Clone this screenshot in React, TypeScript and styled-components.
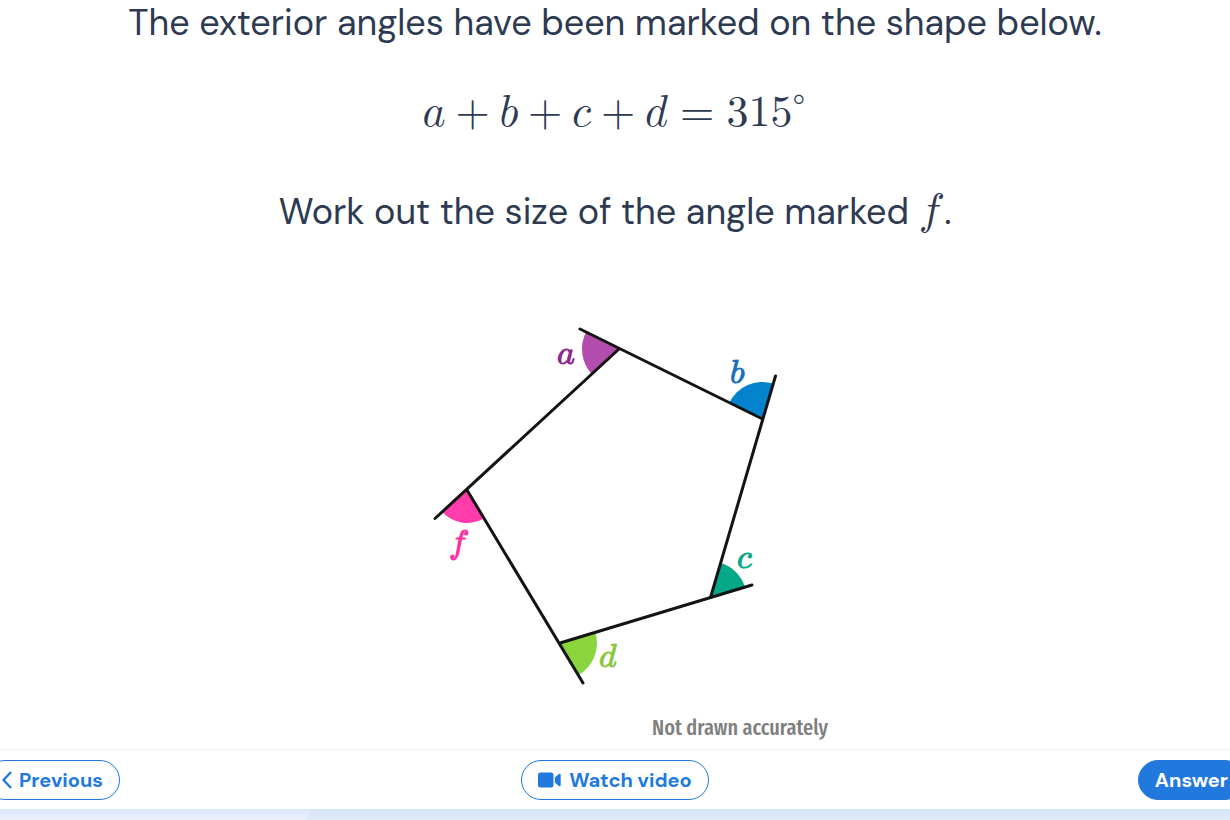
import React from "react";
import styled, { createGlobalStyle } from "styled-components";

const GlobalStyle = createGlobalStyle`
  *, *::before, *::after { box-sizing: border-box; }
  body {
    margin: 0;
    background: #fff;
    overflow-x: hidden;
  }
`;

const mathFont = `"Latin Modern Math", "Latin Modern Roman", "CMU Serif", "Liberation Serif", serif`;

const Page = styled.div`
  display: flex;
  flex-direction: column;
  min-height: 100vh;
  overflow: hidden;
  color: #2d3a52;
  font-family: "DM Sans", Inter, "Liberation Sans", sans-serif;
`;

const Question = styled.main`
  display: flex;
  flex: 1;
  flex-direction: column;
  align-items: center;
  text-align: center;
`;

const MathText = styled("math")`
  font-family: ${mathFont};
  font-size: 44px;
`;

const Line = styled.p`
  margin: 0;
  font-size: 36px;
  line-height: 46px;

  ${MathText} {
    margin-right: 4px;
  }
`;

const Equation = styled.div`
  margin: 48px 0 46px;
  line-height: 44px;
`;

const Figure = styled.figure`
  display: flex;
  flex-direction: column;
  width: 430px;
  max-width: 100%;
  margin: 85px 0 8px;
`;

const Drawing = styled.svg`
  display: block;
  width: 100%;
  font-family: ${mathFont};
  font-size: 34px;
  font-weight: 700;
  text-transform: math-auto;
`;

const Caption = styled.figcaption`
  align-self: flex-end;
  padding-right: 2px;
  color: #7f7f7f;
  font-family: "Fira Sans Extra Condensed", "Open Sans Condensed", "Roboto Condensed", Roboto, sans-serif;
  font-size: 22px;
  font-weight: 500;
  line-height: 24px;
`;

const ActionBar = styled.nav`
  display: grid;
  grid-template-columns: 1fr auto 1fr;
  align-items: center;
  margin: 0 -15px;
  padding: 10px 0 9px;
  border-top: 1px solid #edf1f8;
  background: #fff;
`;

const PillButton = styled.button<{ $filled?: boolean; $align: string }>`
  display: flex;
  align-items: center;
  justify-self: ${(p) => p.$align};
  gap: 7px;
  height: 40px;
  padding: 0 16px;
  border: 1px solid #2179de;
  border-radius: 20px;
  background: ${(p) => (p.$filled ? "#2179de" : "#fff")};
  color: ${(p) => (p.$filled ? "#fff" : "#2179de")};
  font-family: inherit;
  font-size: 20px;
  font-weight: 700;
  line-height: 24px;
  cursor: pointer;
`;

const Backdrop = styled.div`
  height: 11px;
  background:
    linear-gradient(rgba(190, 208, 238, 0.35), rgba(190, 208, 238, 0)),
    linear-gradient(120deg, #ecf2fe 270px, #e1ecfa 270px);
`;

type Point = [number, number];

interface Angle {
  name: string;
  vertex: Point;
  end: Point;
  radius: number;
  fill: string;
  ink: string;
  label: Point;
}

// Each side runs on past its vertex to `end`; the next angle's vertex closes the sector.
const angles: Angle[] = [
  { name: "a", vertex: [619, 349], end: [580, 329], radius: 37, fill: "#b24dae", ink: "#8e2790", label: [557, 364] },
  { name: "f", vertex: [467, 490], end: [435, 518.5], radius: 33, fill: "#ff3ca9", ink: "#ff2fa3", label: [449, 553] },
  { name: "d", vertex: [560, 643], end: [583, 683], radius: 37, fill: "#8ad53d", ink: "#8bc83e", label: [599, 667] },
  { name: "c", vertex: [710.5, 597.5], end: [752, 585], radius: 36, fill: "#06a88a", ink: "#06a88a", label: [737, 568] },
  { name: "b", vertex: [762.5, 419], end: [775.5, 376], radius: 37, fill: "#0383cb", ink: "#1a72bd", label: [730, 383] },
];

const towards = (from: Point, to: Point, distance: number): Point => {
  const dx = to[0] - from[0];
  const dy = to[1] - from[1];
  const length = Math.hypot(dx, dy);
  return [from[0] + (dx / length) * distance, from[1] + (dy / length) * distance];
};

const Pentagon = () => (
  <Drawing viewBox="400 320 430 396" role="img" aria-label="Pentagon with exterior angles a, b, c, d and f">
    {angles.map((angle, i) => {
      const next = angles[(i + 1) % angles.length].vertex;
      const start = towards(angle.vertex, angle.end, angle.radius);
      const stop = towards(angle.vertex, next, angle.radius);
      return (
        <path
          key={angle.name}
          fill={angle.fill}
          d={`M${angle.vertex} L${start} A${angle.radius} ${angle.radius} 0 0 0 ${stop} Z`}
        />
      );
    })}
    {angles.map((angle, i) => {
      const previous = angles[(i + angles.length - 1) % angles.length].vertex;
      return (
        <path
          key={angle.name}
          d={`M${previous} L${angle.end}`}
          fill="none"
          stroke="#141414"
          strokeWidth="3"
          strokeLinecap="round"
        />
      );
    })}
    {angles.map((angle) => (
      <text key={angle.name} x={angle.label[0]} y={angle.label[1]} fill={angle.ink}>
        {angle.name}
      </text>
    ))}
  </Drawing>
);

const ChevronIcon = () => (
  <svg width="10" height="18" viewBox="0 0 10 18" fill="none" stroke="currentColor" strokeWidth="2.4" aria-hidden="true">
    <path d="M9 1 L1.6 9 L9 17" />
  </svg>
);

const VideoIcon = () => (
  <svg width="24" height="16" viewBox="0 0 24 16" fill="currentColor" aria-hidden="true">
    <rect x="0" y="0.5" width="15.5" height="15" rx="2.5" />
    <path d="M16.8 5.5 L20.5 2.3 Q22.7 0.8 22.7 3 V13 Q22.7 15.2 20.5 13.7 L16.8 10.5 Z" />
  </svg>
);

export default function App() {
  return (
    <Page>
      <GlobalStyle />
      <Question>
        <Line>The exterior angles have been marked on the shape below.</Line>
        <Equation>
          <MathText>
            <mi>a</mi>
            <mo>+</mo>
            <mi>b</mi>
            <mo>+</mo>
            <mi>c</mi>
            <mo>+</mo>
            <mi>d</mi>
            <mo>=</mo>
            <msup>
              <mn>315</mn>
              <mo lspace="0" rspace="0">∘</mo>
            </msup>
          </MathText>
        </Equation>
        <Line>
          Work out the size of the angle marked{" "}
          <MathText>
            <mi>f</mi>
          </MathText>
          .
        </Line>
        <Figure>
          <Pentagon />
          <Caption>Not drawn accurately</Caption>
        </Figure>
      </Question>
      <ActionBar>
        <PillButton type="button" $align="start">
          <ChevronIcon />
          Previous
        </PillButton>
        <PillButton type="button" $align="center">
          <VideoIcon />
          Watch video
        </PillButton>
        <PillButton type="button" $align="end" $filled>
          Answer
        </PillButton>
      </ActionBar>
      <Backdrop />
    </Page>
  );
}
